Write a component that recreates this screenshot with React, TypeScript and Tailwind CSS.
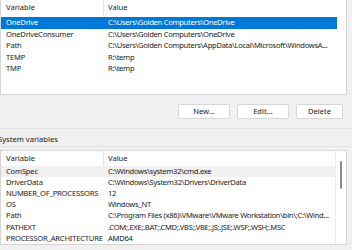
import React from "react";

const userVars: [string, string][] = [
  ["OneDrive", "C:\\Users\\Golden Computers\\OneDrive"],
  ["OneDriveConsumer", "C:\\Users\\Golden Computers\\OneDrive"],
  ["Path", "C:\\Users\\Golden Computers\\AppData\\Local\\Microsoft\\WindowsA..."],
  ["TEMP", "R:\\temp"],
  ["TMP", "R:\\temp"],
];

const sysVars: [string, string][] = [
  ["ComSpec", "C:\\Windows\\system32\\cmd.exe"],
  ["DriverData", "C:\\Windows\\System32\\Drivers\\DriverData"],
  ["NUMBER_OF_PROCESSORS", "12"],
  ["OS", "Windows_NT"],
  ["Path", "C:\\Program Files (x86)\\VMware\\VMware Workstation\\bin\\;C:\\Wind..."],
  ["PATHEXT", ".COM;.EXE;.BAT;.CMD;.VBS;.VBE;.JS;.JSE;.WSF;.WSH;.MSC"],
  ["PROCESSOR_ARCHITECTURE", "AMD64"],
];

function Header() {
  return (
    <div className="flex h-[16px] items-center text-[#1a1a1a]">
      <div className="w-[103px] shrink-0 pl-[5px] border-r border-[#e5e5e5] h-full flex items-center">Variable</div>
      <div className="pl-[4px]">Value</div>
    </div>
  );
}

function Row({ v, val, sel, hover }: { v: string; val: string; sel?: boolean; hover?: boolean }) {
  return (
    <div
      className={
        "flex h-[11.6px] items-center whitespace-nowrap " +
        (sel ? "bg-[#0078d7] text-white" : hover ? "bg-[#f0f0f0] text-[#1a1a1a]" : "text-[#1a1a1a]")
      }
    >
      <div className="w-[103px] shrink-0 pl-[5px] tracking-[-0.2px]">{v}</div>
      <div className="pl-[4px] tracking-[-0.3px]">{val}</div>
    </div>
  );
}

function Btn({ label, w }: { label: string; w: string }) {
  return (
    <div className={"h-[15px] rounded-[2px] border border-[#d6d6d6] bg-white flex items-center justify-center text-[#1a1a1a] " + w}>
      {label}
    </div>
  );
}

export default function App() {
  return (
    <div
      className="w-[352px] h-[250px] overflow-hidden bg-[#f0f0f0] text-[7.6px] leading-none"
      style={{ fontFamily: '"Noto Sans", "Open Sans", sans-serif' }}
    >
      {/* user variables list */}
      <div className="mt-[-1px] w-[347px] h-[96px] border border-[#d4d4d4] bg-white flex">
        <div className="w-[336px] flex flex-col">
          <Header />
          <div className="h-[1px]" />
          {userVars.map(([v, val], i) => (
            <Row key={v} v={v} val={val} sel={i === 0} />
          ))}
        </div>
        <div className="flex-1" />
      </div>

      {/* buttons */}
      <div className="flex justify-end gap-[7px] pr-[9px] mt-[9px]">
        <Btn label="New..." w="w-[52px]" />
        <Btn label="Edit..." w="w-[52px]" />
        <Btn label="Delete" w="w-[47px]" />
      </div>

      <div className="mt-[9px] h-[1px] bg-[#e3e3e3]" />
      <div className="h-[17px] flex items-center pt-[4px] ml-[-2px] text-[#1a1a1a]">System variables</div>
      <div className="h-[1px] bg-[#e3e3e3]" />

      {/* system variables list */}
      <div className="mt-[3px] w-[347px] h-[95px] border border-[#d4d4d4] bg-white flex overflow-hidden">
        <div className="w-[335px] flex flex-col border-r border-[#ececec]">
          <Header />
          {sysVars.map(([v, val], i) => (
            <Row key={v + i} v={v} val={val} hover={i === 0} />
          ))}
        </div>
        <div className="flex-1 flex justify-center pt-[10px]">
          <div className="w-[2px] h-[28px] rounded-full bg-[#8a8a8a]" />
        </div>
      </div>
    </div>
  );
}
